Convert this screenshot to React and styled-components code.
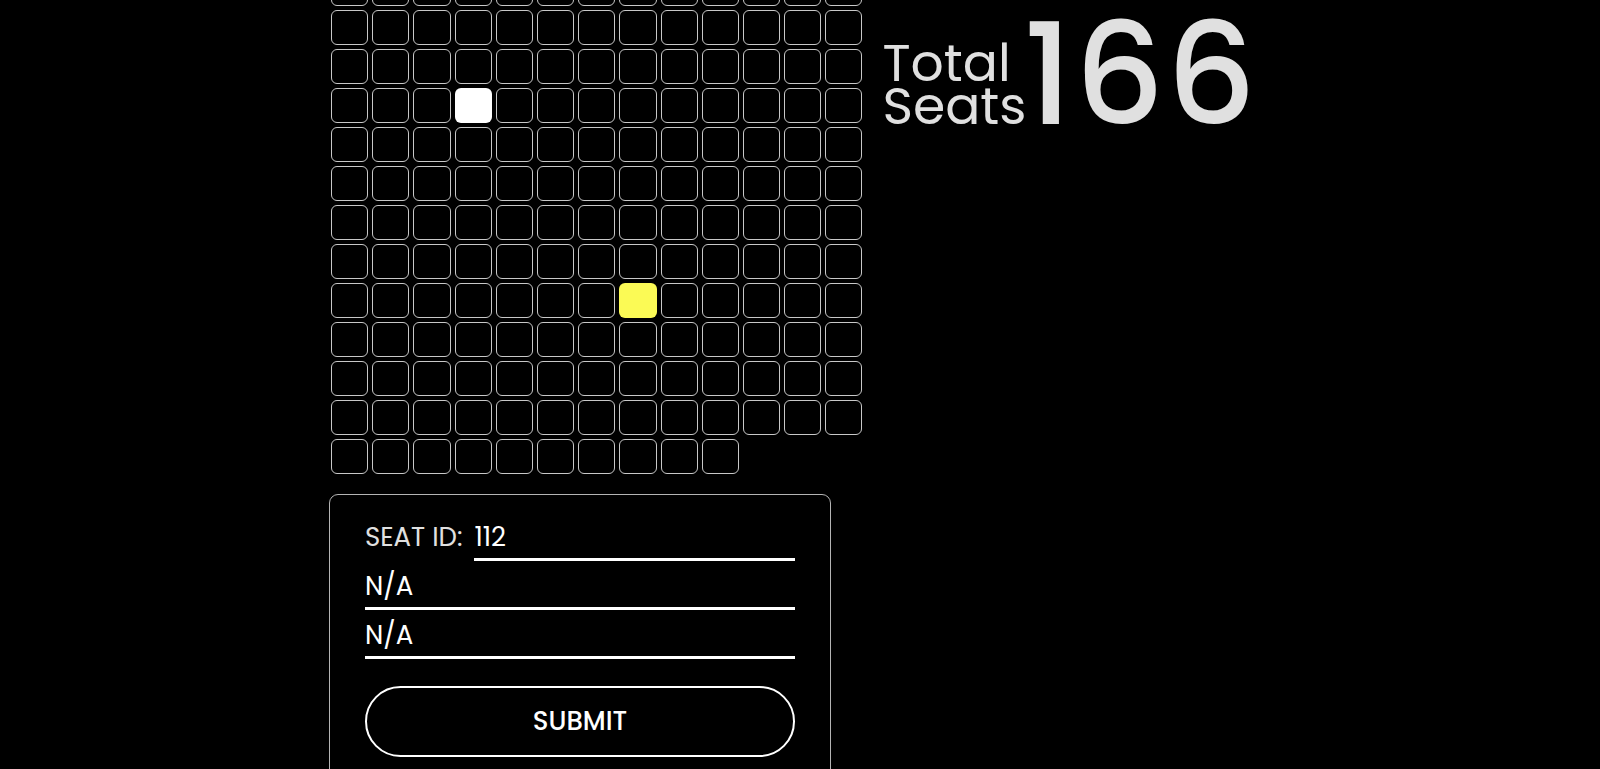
import React, { useState } from 'react'
import styled, { createGlobalStyle } from 'styled-components'

const TOTAL = 166
const BOOKED = [42]

const GlobalStyle = createGlobalStyle`
  html, body {
    margin: 0;
    padding: 0;
    background: #000;
    color: #fff;
    font-family: "Poppins", "Inter", "Noto Sans", sans-serif;
    overflow: hidden;
  }
`

const Page = styled.div`
  display: flex;
  align-items: flex-start;
  gap: 20px;
  padding-left: 329px;
  margin-top: -29px;
`

const LeftColumn = styled.div`
  display: flex;
  flex-direction: column;
  gap: 20px;
`

const SeatGrid = styled.div`
  display: grid;
  grid-template-columns: repeat(13, 37.2px);
  grid-auto-rows: 35px;
  column-gap: 4px;
  row-gap: 4px;
  margin-left: 2px;
`

const Seat = styled.div`
  box-sizing: border-box;
  border-radius: 6px;
  border: 1px solid ${p => (p.$state === 'free' ? '#c8c8c8' : 'transparent')};
  background: ${p =>
    p.$state === 'selected' ? '#fbfa55' : p.$state === 'booked' ? '#ffffff' : 'transparent'};
  cursor: pointer;
`

const BookingCard = styled.form`
  box-sizing: border-box;
  width: 502px;
  border: 1px solid #b4b4b4;
  border-radius: 9px;
  padding: 17px 35px 40px;
  display: flex;
  flex-direction: column;
`

const Field = styled.div`
  display: flex;
  align-items: center;
  height: 49px;
`

const Label = styled.label`
  font-size: 26px;
  color: #e0e0e0;
  margin-right: 12px;
  padding-top: 2px;
  white-space: nowrap;
`

const LineInput = styled.input`
  flex: 1;
  min-width: 0;
  box-sizing: border-box;
  height: 49px;
  padding: 4px 0 0;
  background: transparent;
  border: none;
  border-bottom: 3px solid #fff;
  color: #fff;
  font-family: inherit;
  font-size: 26px;
  outline: none;
`

const SubmitButton = styled.button`
  margin-top: 27px;
  height: 71px;
  border: 2px solid #fff;
  border-radius: 36px;
  background: transparent;
  color: #fff;
  font-family: inherit;
  font-size: 26px;
  font-weight: 500;
  cursor: pointer;
`

const TotalBlock = styled.div`
  display: flex;
  align-items: flex-end;
  margin-top: 34px;
  color: #e0e0e0;
`

const TotalLabel = styled.div`
  font-size: 52px;
  line-height: 43px;
  padding-bottom: 18px;
`

const TotalCount = styled.div`
  margin-left: -3px;
  font-size: 140px;
  font-weight: 500;
  line-height: 1;
  letter-spacing: 2px;
`

export default function App() {
  const [selected, setSelected] = useState(111)

  const seats = Array.from({ length: TOTAL }, (_, i) => i)

  return (
    <>
      <GlobalStyle />
      <Page>
        <LeftColumn>
          <SeatGrid>
            {seats.map(i => (
              <Seat
                key={i}
                $state={i === selected ? 'selected' : BOOKED.includes(i) ? 'booked' : 'free'}
                onClick={() => setSelected(i)}
              />
            ))}
          </SeatGrid>
          <BookingCard onSubmit={e => e.preventDefault()}>
            <Field>
              <Label>SEAT ID:</Label>
              <LineInput value={selected + 1} readOnly />
            </Field>
            <Field>
              <LineInput defaultValue="N/A" />
            </Field>
            <Field>
              <LineInput defaultValue="N/A" />
            </Field>
            <SubmitButton type="submit">SUBMIT</SubmitButton>
          </BookingCard>
        </LeftColumn>
        <TotalBlock>
          <TotalLabel>
            Total
            <br />
            Seats
          </TotalLabel>
          <TotalCount>{TOTAL}</TotalCount>
        </TotalBlock>
      </Page>
    </>
  )
}
